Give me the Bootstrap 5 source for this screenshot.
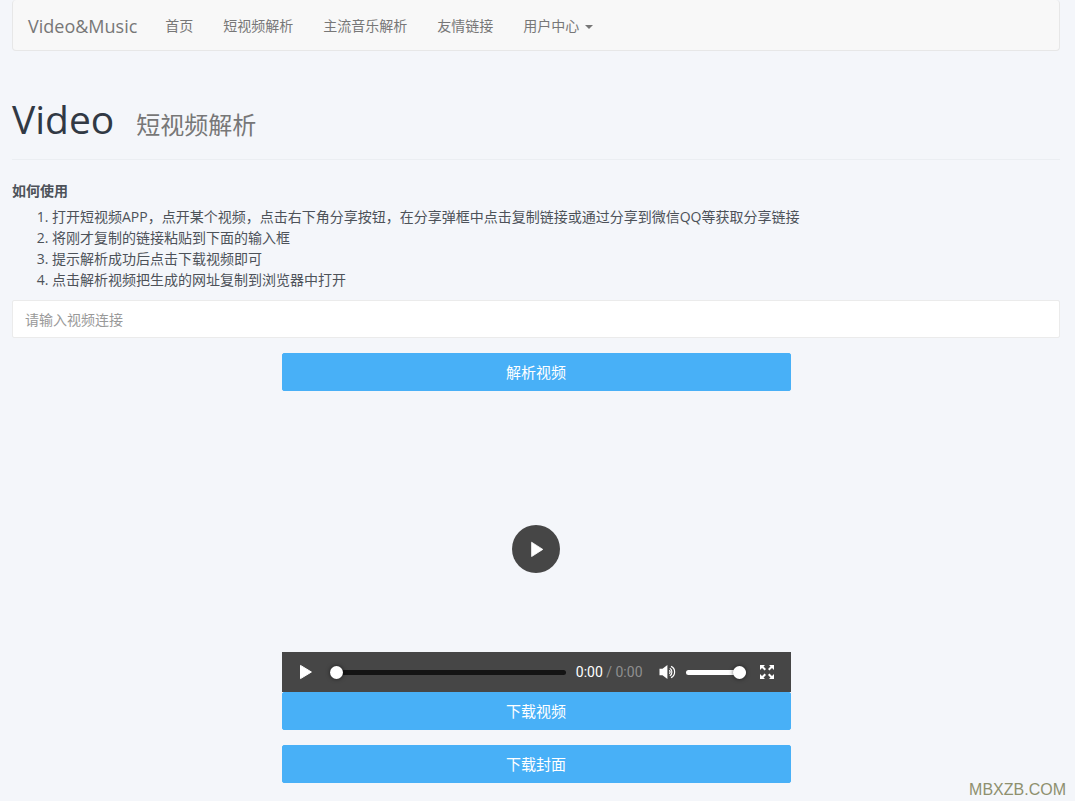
<!DOCTYPE html>
<html lang="zh-CN">
<head>
<meta charset="utf-8">
<meta name="viewport" content="width=device-width, initial-scale=1">
<title>Video&amp;Music</title>
<link href="https://cdn.jsdelivr.net/npm/bootstrap@5.3.0/dist/css/bootstrap.min.css" rel="stylesheet">
<style>
body { background: #f4f6fa; color: #4d5259; font: 14px/21px "Open Sans", "Noto Sans CJK SC", sans-serif; }
.page { padding: 0 15px 0 12px; }
.site-nav { height: 51px; padding: 1px 15px 0; background: #f8f8f8; border: 1px solid #e7e7e7; border-top: 0; border-radius: 4px; }
.site-nav .navbar-brand { font-size: 18px; line-height: 20px; padding: 0; margin: 0 13px 0 0; color: #777; }
.site-nav .navbar-nav .nav-link { padding: 15px; line-height: 20px; color: #777; }
.site-nav .dropdown-toggle::after { border-width: 4px; border-bottom: 0; margin-left: 6px; vertical-align: 2px; }
.page-title { margin: 44px 0 20px; padding-bottom: 16px; border-bottom: 1px solid #ebeef2; }
.page-title h1 { font-size: 39px; line-height: 48px; color: #313944; }
.page-title h1 small { font-size: 24px; line-height: 24px; color: #777; margin-left: 22px; }
.steps { padding-left: 40px; margin: 5px 0 10px; }
.link-box { height: 38px; padding: 6px 12px; font-size: 14px; border: 1px solid #ebebeb; border-radius: 2px; color: #4d5259; }
.link-box::placeholder { color: #999; }
.half { --bs-gutter-x: 30px; }
.btn-sky { --bs-btn-color: #fff; --bs-btn-bg: #48b0f7; --bs-btn-border-color: #48b0f7; --bs-btn-hover-color: #fff; --bs-btn-hover-bg: #65bdf8; --bs-btn-hover-border-color: #65bdf8; height: 38px; padding: 0; font-size: 15px; line-height: 36px; border-radius: 2px; }
.gap-y { margin-top: 15px; }
.player button { border: 0; padding: 0; background: none; display: flex; align-items: center; justify-content: center; color: #fff; }
.player .big-play { width: 48px; height: 48px; border-radius: 50%; background: #464646; }
.controls { height: 40px; background: #464646; padding: 0 16px 0 17px; color: #fff; }
.clock { margin: 0 16px 0 10px; white-space: nowrap; font-family: Roboto, sans-serif; }
.clock span { color: #8f8f8f; }
.bar { appearance: none; background: none; height: 14px; margin: 0; min-width: 0; }
.bar.seek { margin-left: 18px; }
.bar::-webkit-slider-runnable-track { height: 5px; border-radius: 3px; background: #141414; }
.bar::-webkit-slider-thumb { appearance: none; width: 13px; height: 13px; margin-top: -4px; border-radius: 50%; background: #fff; box-shadow: 0 0 4px rgba(0,0,0,.6); }
.bar::-moz-range-track { height: 5px; border-radius: 3px; background: #141414; }
.bar.volume { width: 60px; margin: 0 13px 0 10px; }
.bar.volume::-webkit-slider-runnable-track { background: #fff; }
.site-mark { font: 16px/14px "Liberation Sans", sans-serif; color: #8e906f; margin-right: -6px; }
</style>
</head>
<body>
<div class="page">
  <nav class="site-nav navbar navbar-expand">
    <a class="navbar-brand" href="#">Video&amp;Music</a>
    <ul class="navbar-nav">
      <li class="nav-item"><a class="nav-link" href="#">首页</a></li>
      <li class="nav-item"><a class="nav-link" href="#">短视频解析</a></li>
      <li class="nav-item"><a class="nav-link" href="#">主流音乐解析</a></li>
      <li class="nav-item"><a class="nav-link" href="#">友情链接</a></li>
      <li class="nav-item dropdown"><a class="nav-link dropdown-toggle" href="#" role="button" data-bs-toggle="dropdown">用户中心</a></li>
    </ul>
  </nav>

  <header class="page-title">
    <h1 class="m-0 fw-normal">Video<small>短视频解析</small></h1>
  </header>

  <main>
    <label for="link" class="d-block fw-bold">如何使用</label>
    <ol class="steps">
      <li>打开短视频APP，点开某个视频，点击右下角分享按钮，在分享弹框中点击复制链接或通过分享到微信QQ等获取分享链接</li>
      <li>将刚才复制的链接粘贴到下面的输入框</li>
      <li>提示解析成功后点击下载视频即可</li>
      <li>点击解析视频把生成的网址复制到浏览器中打开</li>
    </ol>
    <input id="link" type="text" class="form-control link-box" placeholder="请输入视频连接">

    <div class="row half gap-y">
      <div class="col-6 offset-3">
        <button type="button" class="btn btn-sky w-100 d-block">解析视频</button>
        <div class="player ratio ratio-16x9 gap-y">
          <div class="d-flex align-items-center justify-content-center">
            <button type="button" class="big-play" aria-label="播放">
              <svg width="14" height="16" viewBox="0 0 14 16"><path d="M1.8.8v14.4L13 8z" transform="translate(.8 .4)" fill="currentColor" stroke="currentColor" stroke-width=".8" stroke-linejoin="round"/></svg>
            </button>
          </div>
          <div class="d-flex align-items-end">
            <div class="controls d-flex align-items-center w-100">
              <button type="button" aria-label="播放"><svg width="13" height="16" viewBox="0 0 13 16"><path d="M1.5 1.4v13.2L12.4 8z" fill="currentColor" stroke="currentColor" stroke-width="1" stroke-linejoin="round"/></svg></button>
              <input type="range" class="bar seek flex-grow-1" value="0" aria-label="进度">
              <div class="clock">0:00 <span>/ 0:00</span></div>
              <button type="button" aria-label="音量"><svg width="17" height="16" viewBox="0 0 17 16" fill="none" stroke="currentColor" stroke-width="1.2"><path d="M.5 4.8h3L8.4 1v14l-4.9-3.8h-3z" fill="currentColor" stroke="none"/><path d="M10.2 6.4a1.8 1.8 0 0 1 0 3.2M10.8 4.3c2.8 1.4 2.8 6 0 7.4M12 2.4c4.8 2 4.8 9.2 0 11.2"/></svg></button>
              <input type="range" class="bar volume" value="100" aria-label="音量大小">
              <button type="button" aria-label="全屏"><svg width="16" height="16" viewBox="0 0 16 16" fill="currentColor"><path d="M1 1h5L4.5 2.5 7 5 5.6 6.4 3 3.9 1 6zM15 1h-5l1.5 1.5L9 5l1.4 1.4L13 3.9 15 6zM1 15h5l-1.5-1.5L7 11 5.6 9.6 3 12.1 1 10zM15 15h-5l1.5-1.5L9 11l1.4-1.4 2.6 2.5 2-2.1z"/></svg></button>
            </div>
          </div>
        </div>
        <button type="button" class="btn btn-sky w-100 d-block">下载视频</button>
        <button type="button" class="btn btn-sky w-100 d-block gap-y">下载封面</button>
      </div>
    </div>
  </main>
  <footer class="site-mark text-end">MBXZB.COM</footer>
</div>
<script src="https://cdn.jsdelivr.net/npm/bootstrap@5.3.0/dist/js/bootstrap.bundle.min.js"></script>
</body>
</html>
